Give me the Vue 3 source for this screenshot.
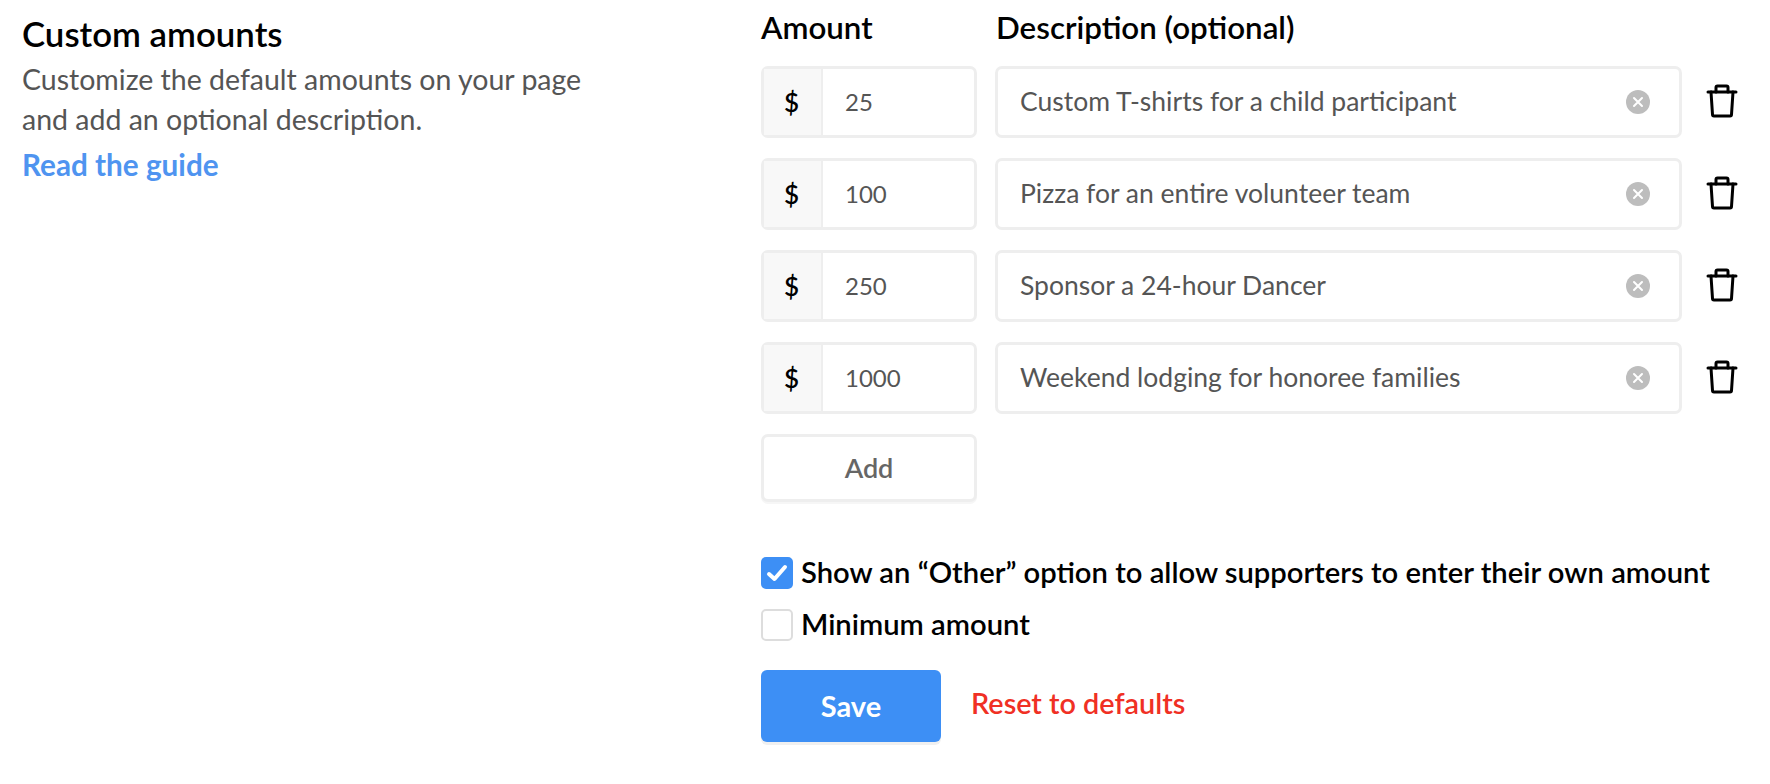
<script setup>
const rows = [
  { amount: '25', text: 'Custom T-shirts for a child participant' },
  { amount: '100', text: 'Pizza for an entire volunteer team' },
  { amount: '250', text: 'Sponsor a 24-hour Dancer' },
  { amount: '1000', text: 'Weekend lodging for honoree families' },
]
</script>

<template>
  <div class="page">
    <section class="intro">
      <h2 class="title">Custom amounts</h2>
      <p class="lede">Customize the default amounts on your page<br />and add an optional description.</p>
      <a class="guide">Read the guide</a>
    </section>
    <section class="form">
      <div class="heads">
        <span class="head-amount">Amount</span>
        <span>Description (optional)</span>
      </div>
      <div v-for="row in rows" :key="row.amount" class="row">
        <div class="amount">
          <span class="prefix">$</span>
          <span class="value">{{ row.amount }}</span>
        </div>
        <div class="desc">
          <span class="desc-text">{{ row.text }}</span>
          <svg class="clear" viewBox="0 0 24 24" width="24" height="24">
            <circle cx="12" cy="12" r="12" fill="#bdbdbd" />
            <path d="M8 8l8 8M16 8l-8 8" stroke="#fff" stroke-width="2" stroke-linecap="round" />
          </svg>
        </div>
        <svg class="trash" viewBox="0 0 32 34" width="32" height="34" fill="none" stroke="#000" stroke-width="3" stroke-linecap="round" stroke-linejoin="round">
          <path d="M2 8h28" />
          <path d="M10 8V3.500a1.500 1.500 0 0 1 1.500-1.500h9a1.500 1.500 0 0 1 1.500 1.500V8" />
          <path d="M5 8l1.500 22.500a1.500 1.500 0 0 0 1.500 1.500h16a1.500 1.500 0 0 0 1.500-1.500L27 8" />
        </svg>
      </div>
      <button class="add" type="button">Add</button>
      <label class="check first">
        <span class="box on">
          <svg viewBox="0 0 32 32" width="32" height="32" fill="none" stroke="#fff" stroke-width="4" stroke-linecap="round" stroke-linejoin="round"><path d="M8 17l5.500 5L24 10" /></svg>
        </span>
        <span class="check-label">Show an “Other” option to allow supporters to enter their own amount</span>
      </label>
      <label class="check second">
        <span class="box"></span>
        <span class="check-label">Minimum amount</span>
      </label>
      <div class="actions">
        <button class="save" type="button">Save</button>
        <a class="reset">Reset to defaults</a>
      </div>
    </section>
  </div>
</template>

<style>
body { background: #fff; }
</style>

<style scoped>
.page {
  display: flex;
  width: 1770px;
  height: 784px;
  overflow: hidden;
  font-family: Lato, "Open Sans", sans-serif;
  color: #000;
}
.intro { width: 739px; margin-left: 22px; padding-top: 14px; flex: none; }
.title { margin: 0; font-size: 34.800px; line-height: 40px; font-weight: 600; }
.lede { margin: 5px 0 0; font-size: 28.500px; line-height: 40px; color: #555; }
.guide { display: block; margin-top: 6px; font-size: 29.700px; line-height: 40px; font-weight: 700; color: #4f94f0; }
.form { flex: none; width: 1000px; }
.heads { display: flex; height: 66px; padding-top: 7px; box-sizing: border-box; font-size: 31.300px; line-height: 40px; font-weight: 600; }
.head-amount { width: 235px; }
.row { display: flex; align-items: center; height: 72px; margin-bottom: 20px; }
.amount {
  display: flex; width: 216px; height: 72px; box-sizing: border-box;
  border: 3px solid #eeeeee; border-radius: 7px; font-size: 24px; color: #555;
}
.prefix { width: 59px; padding-right: 2px; flex: none; display: flex; align-items: center; justify-content: center; background: #f8f8f8; border-right: 2px solid #eee; color: #000; box-sizing: border-box; font-weight: 600; font-size: 26px; }
.value { display: flex; align-items: center; padding: 0 0 2px 22px; }
.desc {
  display: flex; align-items: center; justify-content: space-between;
  width: 687px; height: 72px; margin-left: 18px; padding: 0 29px 2px 22px; box-sizing: border-box;
  border: 3px solid #eeeeee; border-radius: 7px; font-size: 26.500px; color: #555;
}
.clear { flex: none; margin-top: 2px; }
.trash { margin-left: 24px; margin-top: -2px; flex: none; }
.add {
  display: block; width: 216px; height: 68px; padding: 0 0 2px; background: #fff;
  border: 3px solid #eeeeee; border-radius: 7px; font: 600 27px Lato, sans-serif; color: #666;
  box-shadow: 0 2px 0 #f6f6f6;
}
.check { display: flex; align-items: center; gap: 8px; font-size: 29.200px; font-weight: 600; line-height: 32px; }
.check-label { position: relative; top: -1px; }
.first { margin-top: 55px; }
.second { margin-top: 20px; }
.box { width: 32px; height: 32px; box-sizing: border-box; border: 2px solid #ddd; border-radius: 5px; flex: none; display: block; }
.box.on { border: 0; background: #3d8ff5; }
.box svg { display: block; }
.actions { display: flex; align-items: center; margin-top: 29px; }
.save {
  width: 180px; height: 72px; padding: 0 0 2px; border: 0; border-radius: 6px; background: #3d8ff5; color: #fff;
  font: 700 29px Lato, sans-serif; box-shadow: 0 3px 0 #f0f0f0;
}
.reset { margin-left: 30px; margin-top: -6px; font-size: 28.800px; font-weight: 600; color: #f03024; }
</style>
